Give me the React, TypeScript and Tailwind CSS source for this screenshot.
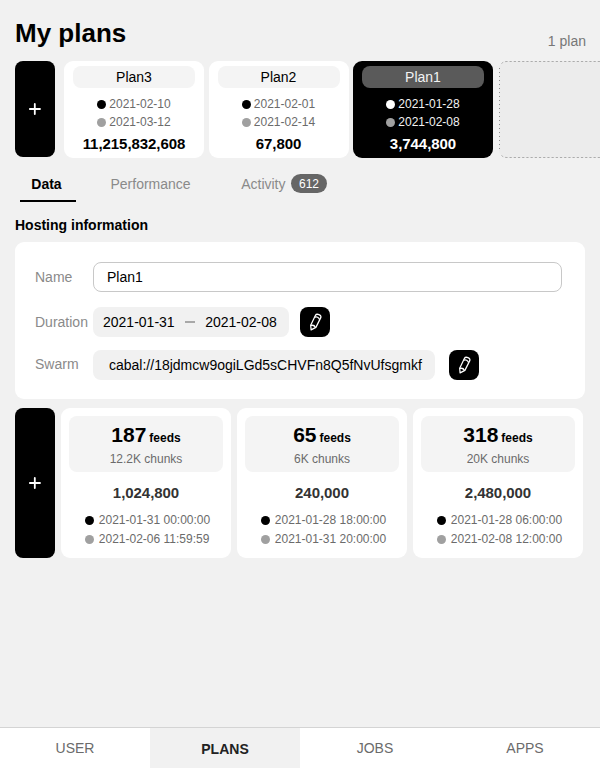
import React from "react";

type Plan = { name: string; start: string; end: string; total: string; active?: boolean };
type Feed = { feeds: string; chunks: string; total: string; start: string; end: string };

const plans: Plan[] = [
  { name: "Plan3", start: "2021-02-10", end: "2021-03-12", total: "11,215,832,608" },
  { name: "Plan2", start: "2021-02-01", end: "2021-02-14", total: "67,800" },
  { name: "Plan1", start: "2021-01-28", end: "2021-02-08", total: "3,744,800", active: true },
];

const feeds: Feed[] = [
  { feeds: "187", chunks: "12.2K chunks", total: "1,024,800", start: "2021-01-31 00:00:00", end: "2021-02-06 11:59:59" },
  { feeds: "65", chunks: "6K chunks", total: "240,000", start: "2021-01-28 18:00:00", end: "2021-01-31 20:00:00" },
  { feeds: "318", chunks: "20K chunks", total: "2,480,000", start: "2021-01-28 06:00:00", end: "2021-02-08 12:00:00" },
];

function AddButton({ size }: { size: string }) {
  return (
    <button aria-label="Add" className={`flex w-10 shrink-0 items-center justify-center rounded-lg bg-black ${size}`}>
      <svg width="12" height="12" viewBox="0 0 12 12" fill="none" stroke="#fff" strokeWidth="1.8" strokeLinecap="round">
        <path d="M5.8 0.9v10.2M0.8 6h10.2" />
      </svg>
    </button>
  );
}

function Dot({ color }: { color: string }) {
  return <span className={`size-[9px] shrink-0 rounded-full ${color}`} />;
}

function PlanCard({ plan }: { plan: Plan }) {
  const { active } = plan;
  return (
    <div className={`flex h-[97px] w-[140px] shrink-0 flex-col items-center rounded-[9px] pt-[5px] ${active ? "bg-black text-white" : "bg-white text-black"}`}>
      <div className={`h-[22px] w-[122px] rounded-lg text-center text-sm leading-[22px] ${active ? "bg-[#5a5a5a] text-[#f2f2f2]" : "bg-[#f4f4f4]"}`}>
        {plan.name}
      </div>
      <div className={`mt-[7px] text-xs leading-[18px] ${active ? "text-[#f2f2f2]" : "text-[#6b6b6b]"}`}>
        <div className="flex items-center gap-[3px]">
          <Dot color={active ? "bg-white" : "bg-black"} />
          {plan.start}
        </div>
        <div className="flex items-center gap-[3px]">
          <Dot color="bg-[#a0a0a0]" />
          {plan.end}
        </div>
      </div>
      <div className="mt-1 text-[15px] leading-[18px] font-bold tracking-[-0.05px]">{plan.total}</div>
    </div>
  );
}

function EditButton() {
  return (
    <button aria-label="Edit" className="flex size-[30px] shrink-0 items-center justify-center rounded-lg bg-black">
      <svg width="13" height="18" viewBox="0 0 13 18" fill="none" stroke="#fff" strokeWidth="1.25" strokeLinecap="round" strokeLinejoin="round">
        <path d="M1.7 12.2 6.5 2.3C7.6.2 12.8 1.8 11.8 4.6L6.9 14.4 2.1 16.9Z" />
        <path d="M6.1 4.1C7.7 3.4 9.8 4.4 10.4 6.2M2 12.4C3.8 12 5.7 12.8 6.3 14.3" />
      </svg>
    </button>
  );
}

function FeedCard({ feed }: { feed: Feed }) {
  return (
    <div className="flex h-[150px] w-[170px] shrink-0 flex-col items-center rounded-[9px] bg-white pt-2">
      <div className="flex h-14 w-[154px] flex-col items-center rounded-lg bg-[#f4f4f4] pt-[7px]">
        <div className="flex h-6 items-baseline gap-[3px] font-bold">
          <span className="text-[21px] leading-6">{feed.feeds}</span>
          <span className="text-xs">feeds</span>
        </div>
        <div className="mt-[5px] text-xs leading-[14px] text-[#6b6b6b]">{feed.chunks}</div>
      </div>
      <div className="mt-3 text-[15px] leading-[18px] font-bold tracking-[-0.05px] text-[#333]">{feed.total}</div>
      <div className="mt-[9px] pl-[3px] text-xs leading-[19px] text-[#6b6b6b]">
        <div className="flex items-center gap-[5px]">
          <Dot color="bg-black" />
          {feed.start}
        </div>
        <div className="flex items-center gap-[5px]">
          <Dot color="bg-[#a0a0a0]" />
          {feed.end}
        </div>
      </div>
    </div>
  );
}

export default function App() {
  return (
    <div className="flex h-[768px] w-[600px] flex-col overflow-hidden bg-[#f1f1f1] font-['Liberation_Sans',Arial,sans-serif] text-sm text-black">
      <header className="flex h-[61px] shrink-0 justify-between pr-3.5 pl-[15px]">
        <h1 className="pt-[18px] text-[26px] leading-[30px] font-bold">My plans</h1>
        <span className="pt-[33px] leading-4 text-[#777]">1 plan</span>
      </header>

      <section className="flex h-[97px] shrink-0 overflow-hidden pl-[15px]">
        <AddButton size="h-24" />
        <div className="ml-[9px] flex shrink-0 gap-[4.5px]">
          {plans.map((plan) => (
            <PlanCard key={plan.name} plan={plan} />
          ))}
        </div>
        <div className="ml-1.5 h-[97px] w-[140px] shrink-0 rounded-lg bg-[#ececec]">
          <svg width="140" height="97" fill="none" stroke="#acacac">
            <path d="M2.5 2.5Q4.5 .5 8 .5H132M2.5 94.5Q4.5 96.5 8 96.5H132" strokeDasharray="2.2 2" />
            <path d="M.5 7V90" stroke="#8c8c8c" strokeDasharray="1 3" />
          </svg>
        </div>
      </section>

      <nav className="flex h-11 shrink-0 pt-4 pl-5 leading-5 text-[#8a8a8a]">
        <span className="h-[28px] w-14 border-b-2 border-black pr-[3px] text-center font-bold text-black">Data</span>
        <span className="ml-[34.5px]">Performance</span>
        <span className="ml-[50.5px]">Activity</span>
        <span className="ml-[5.5px] h-[19px] w-9 rounded-full bg-[#666] text-center text-xs leading-5 text-white">612</span>
      </nav>

      <h2 className="mt-[15px] pl-[15px] leading-4 font-bold">Hosting information</h2>

      <section className="mx-[15px] mt-[9px] h-[157px] shrink-0 rounded-[9px] bg-white pt-5 pl-5">
        <div className="flex h-[30px]">
          <label className="w-[58px] leading-[30px] text-[#8a8a8a]">Name</label>
          <input className="h-[30px] w-[469px] rounded-lg border border-[#c8c8c8] bg-white px-[13px] text-sm text-black outline-none" defaultValue="Plan1" />
        </div>
        <div className="mt-[15px] flex h-[30px]">
          <label className="w-[58px] leading-[30px] text-[#8a8a8a]">Duration</label>
          <div className="flex w-[196px] items-center rounded-lg bg-[#f1f1f1] pl-2.5">
            <span>2021-01-31</span>
            <span className="mx-[10px] h-[2px] w-[10.5px] bg-[#a8a8a8]" />
            <span>2021-02-08</span>
          </div>
          <div className="ml-[11px]"><EditButton /></div>
        </div>
        <div className="mt-[13px] flex h-[30px]">
          <label className="w-[58px] leading-[28px] text-[#8a8a8a]">Swarm</label>
          <div className="w-[342px] rounded-lg bg-[#f1f1f1] pl-4 leading-[30px] whitespace-nowrap">
            cabal://18jdmcw9ogiLGd5sCHVFn8Q5fNvUfsgmkf
          </div>
          <div className="ml-3.5"><EditButton /></div>
        </div>
      </section>

      <section className="mt-[9px] flex shrink-0 gap-1.5 pl-[15px]">
        <AddButton size="h-[150px]" />
        {feeds.map((feed) => (
          <FeedCard key={feed.feeds} feed={feed} />
        ))}
      </section>

      <footer className="mt-auto grid h-[41px] shrink-0 grid-cols-4 border-t border-[#d4d4d4] bg-white text-center leading-10 text-[#6b6b6b]">
        <span>USER</span>
        <span className="bg-[#f1f1f1] pt-px font-bold text-[#222]">PLANS</span>
        <span>JOBS</span>
        <span>APPS</span>
      </footer>
    </div>
  );
}
